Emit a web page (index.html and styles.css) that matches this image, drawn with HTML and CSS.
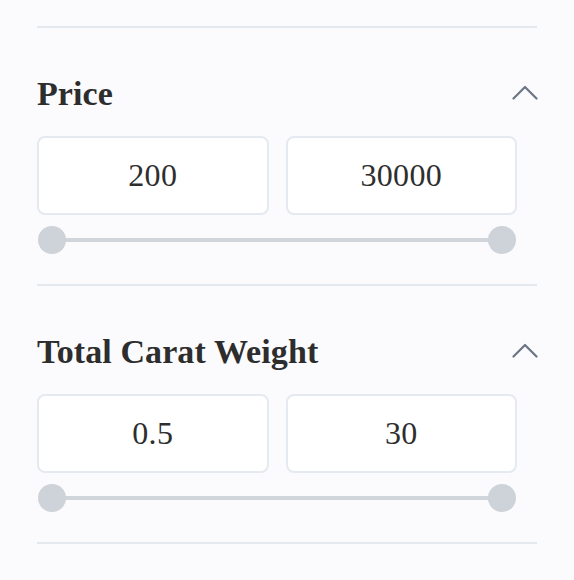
FILE: index.html
```html
<!DOCTYPE html>
<html lang="en">
<head>
<meta charset="utf-8">
<title>Filters</title>
<link rel="stylesheet" href="styles.css">
</head>
<body>
<div class="panel">
  <section class="filter">
    <div class="filter-head">
      <h2 class="filter-title">Price</h2>
      <svg class="chevron" width="26" height="16" viewBox="0 0 26 16" aria-hidden="true"><polyline points="1.5,14.5 13,3 24.5,14.5" fill="none" stroke="#6b7584" stroke-width="2.2" stroke-linecap="round" stroke-linejoin="round"/></svg>
    </div>
    <div class="range-inputs">
      <input class="range-box" type="text" value="200">
      <input class="range-box" type="text" value="30000">
    </div>
    <div class="slider">
      <div class="slider-track"></div>
      <span class="thumb thumb-min"></span>
      <span class="thumb thumb-max"></span>
    </div>
  </section>
  <section class="filter">
    <div class="filter-head">
      <h2 class="filter-title">Total Carat Weight</h2>
      <svg class="chevron" width="26" height="16" viewBox="0 0 26 16" aria-hidden="true"><polyline points="1.5,14.5 13,3 24.5,14.5" fill="none" stroke="#6b7584" stroke-width="2.2" stroke-linecap="round" stroke-linejoin="round"/></svg>
    </div>
    <div class="range-inputs">
      <input class="range-box" type="text" value="0.5">
      <input class="range-box" type="text" value="30">
    </div>
    <div class="slider">
      <div class="slider-track"></div>
      <span class="thumb thumb-min"></span>
      <span class="thumb thumb-max"></span>
    </div>
  </section>
  <div class="end-rule"></div>
</div>
</body>
</html>
```
FILE: styles.css
```css
html, body {
  margin: 0;
  padding: 0;
  background: #fbfbfd;
}
body {
  font-family: "Liberation Serif", "Times New Roman", serif;
  color: #2e2e2e;
}
.panel {
  width: 500px;
  padding: 26px 37px 0 37px;
}
.filter {
  border-top: 2px solid #e4e8ef;
  padding: 46px 0 30px 0;
}
.filter-head {
  display: flex;
  justify-content: space-between;
  align-items: center;
  height: 40px;
  margin-bottom: 22px;
}
.filter-title {
  margin: 0;
  font-size: 34px;
  line-height: 40px;
  font-weight: 700;
  color: #2d2d2d;
  letter-spacing: 0.1px;
}
.chevron {
  display: block;
  margin-right: -1px;
  margin-bottom: 4px;
}
.range-inputs {
  display: grid;
  grid-template-columns: 1fr 1fr;
  column-gap: 17px;
  width: 480px;
}
.range-box {
  box-sizing: border-box;
  width: 100%;
  height: 79px;
  margin: 0;
  padding: 0;
  border: 2px solid #e5e9f0;
  border-radius: 8px;
  background: #ffffff;
  font-family: "Liberation Serif", "Times New Roman", serif;
  font-size: 32px;
  letter-spacing: 0.3px;
  color: #2e2e2e;
  text-align: center;
  outline: none;
}
.slider {
  position: relative;
  width: 479px;
  height: 28px;
  margin-top: 11px;
}
.slider-track {
  position: absolute;
  left: 15px;
  right: 15px;
  top: 12px;
  height: 4px;
  background: #cfd5da;
}
.thumb {
  position: absolute;
  top: 0;
  width: 28px;
  height: 28px;
  border-radius: 50%;
  background: #cdd3d8;
}
.thumb-min { left: 1px; }
.thumb-max { right: 0; }
.end-rule {
  border-top: 2px solid #e4e8ef;
}
```
